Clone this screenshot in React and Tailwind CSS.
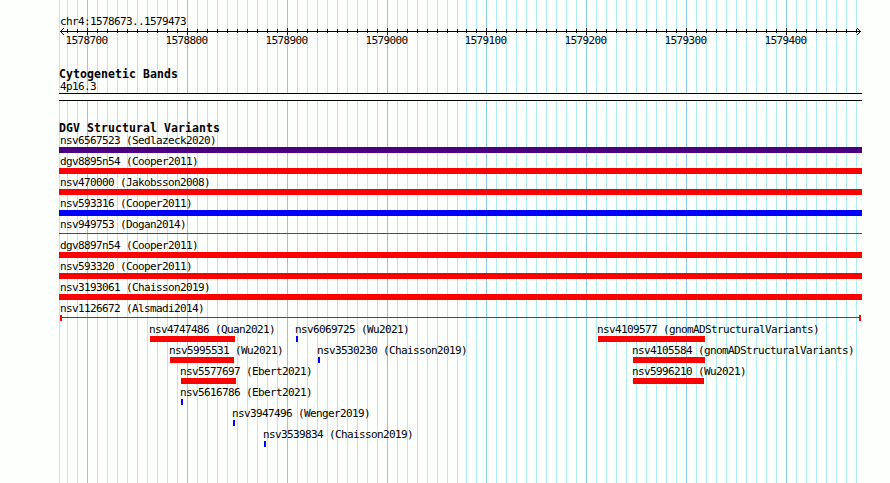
const LEFT = 59;
const WIDTH = 803;
const CHAR = 6;

// minor grid line every 10 bases
const gridLines = Array.from({ length: 80 }, (_, i) => {
    const x = 67 + i * 10;
    return { x: x > 460 ? x - 1 : x, major: i % 10 === 2 };
});

const axisLabels = [
    '1578700',
    '1578800',
    '1578900',
    '1579000',
    '1579100',
    '1579200',
    '1579300',
    '1579400',
];

const fullVariants = [
    { label: 'nsv6567523 (Sedlazeck2020)', color: 'bg-[#4b0082]' },
    { label: 'dgv8895n54 (Cooper2011)', color: 'bg-[#ff0000]' },
    { label: 'nsv470000 (Jakobsson2008)', color: 'bg-[#ff0000]' },
    { label: 'nsv593316 (Cooper2011)', color: 'bg-[#0000ff]' },
    { label: 'nsv949753 (Dogan2014)', kind: 'line' },
    { label: 'dgv8897n54 (Cooper2011)', color: 'bg-[#ff0000]' },
    { label: 'nsv593320 (Cooper2011)', color: 'bg-[#ff0000]' },
    { label: 'nsv3193061 (Chaisson2019)', color: 'bg-[#ff0000]' },
    { label: 'nsv1126672 (Alsmadi2014)', kind: 'span' },
];

const red = 'bg-[#ff0000]';
const blue = 'bg-[#0000ff]';

const partialVariants = [
    [
        { label: 'nsv4747486 (Quan2021)', start: 150, end: 235, color: red },
        { label: 'nsv6069725 (Wu2021)', start: 296, end: 298, color: blue },
        { label: 'nsv4109577 (gnomADStructuralVariants)', start: 598, end: 705, color: red },
    ],
    [
        { label: 'nsv5995531 (Wu2021)', start: 170, end: 234, color: red },
        { label: 'nsv3530230 (Chaisson2019)', start: 318, end: 320, color: blue },
        { label: 'nsv4105584 (gnomADStructuralVariants)', start: 633, end: 705, color: red },
    ],
    [
        { label: 'nsv5577697 (Ebert2021)', start: 181, end: 236, color: red },
        { label: 'nsv5996210 (Wu2021)', start: 633, end: 704, color: red },
    ],
    [{ label: 'nsv5616786 (Ebert2021)', start: 181, end: 183, color: blue }],
    [{ label: 'nsv3947496 (Wenger2019)', start: 233, end: 235, color: blue }],
    [{ label: 'nsv3539834 (Chaisson2019)', start: 264, end: 266, color: blue }],
];

const Label = ({ children }) => (
    <div className="h-[13px] whitespace-pre font-['DejaVu_Sans_Mono',monospace] text-[11px] leading-[13px] tracking-[-0.622px] text-black">
        {children}
    </div>
);

const Heading = ({ children }) => (
    <h2 className="h-[13px] whitespace-pre font-['DejaVu_Sans_Mono',monospace] text-[11.5px] font-bold leading-[13px] tracking-[0.077px] text-black">
        {children}
    </h2>
);

const Grid = () => (
    <svg className="absolute inset-0" width="890" height="483" shapeRendering="crispEdges">
        <rect x={LEFT} y="0" width="1" height="483" fill="#afeeee" />
        {gridLines.map(({ x, major }) => (
            <rect key={x} x={x} y="0" width="1" height="483" fill={major ? '#87ceeb' : '#afeeee'} />
        ))}
    </svg>
);

const Axis = () => (
    <svg className="block" width={WIDTH} height="7" viewBox="59 28 803 7" shapeRendering="crispEdges">
        <rect x="60" y="31" width="801" height="1" />
        {gridLines.map(({ x, major }) => (
            <rect key={x} x={x} y={major ? 28 : 29} width="1" height={major ? 7 : 4} />
        ))}
        {[1, 2, 3].map((d) => (
            <g key={d}>
                <rect x={60 + d} y={31 - d} width="1" height="1" />
                <rect x={60 + d} y={31 + d} width="1" height="1" />
                <rect x={860 - d} y={31 - d} width="1" height="1" />
                <rect x={860 - d} y={31 + d} width="1" height="1" />
            </g>
        ))}
    </svg>
);

const Glyph = ({ kind, color }) => {
    if (kind === 'line') {
        return (
            <div className="h-[6px] pt-[2px]">
                <div className="h-px bg-[#ff0000]" />
            </div>
        );
    }
    if (kind === 'span') {
        return (
            <div className="mx-px flex h-[6px]">
                <div className="w-[2px] bg-[#ff0000]" />
                <div className="mt-[2px] h-px flex-1 bg-[#ff0000]" />
                <div className="w-[2px] bg-[#ff0000]" />
            </div>
        );
    }
    return <div className={`h-[6px] ${color}`} />;
};

const VariantRow = ({ items }) => {
    let cursor = LEFT;

    return (
        <div className="flex h-[21px]">
            {items.map((item) => {
                const offset = item.start - 1 - cursor;
                const width = item.label.length * CHAR;
                cursor = item.start - 1 + width;
                return (
                    <div key={item.label} className="shrink-0" style={{ marginLeft: offset, width }}>
                        <Label>{item.label}</Label>
                        <div className={`ml-px h-[6px] ${item.color}`} style={{ width: item.end - item.start }} />
                    </div>
                );
            })}
        </div>
    );
};

const App = () => (
    <div className="relative h-[483px] w-[890px] overflow-hidden bg-[#fdfffc]">
        <Grid />

        <main className="relative ml-[59px] w-[803px] pt-[15px]">
            {/* Ruler */}
            <div className="h-[13px] pl-px">
                <Label>chr4:1578673..1579473</Label>
            </div>
            <Axis />
            <div className="-mt-px flex h-[34px] gap-[58px] pl-[6.5px]">
                {axisLabels.map((label, i) => (
                    <div key={label} className={i === 4 ? '-ml-px w-[42px]' : 'w-[42px]'}>
                        <Label>{label}</Label>
                    </div>
                ))}
            </div>

            {/* Cytogenetic bands */}
            <Heading>Cytogenetic Bands</Heading>
            <div className="-mt-px h-[13px] pl-px">
                <Label>4p16.3</Label>
            </div>
            <div className="h-[8px] border-y border-black bg-[#fdfffc]" />

            {/* Structural variants */}
            <div className="mt-[21px]">
                <Heading>DGV Structural Variants</Heading>
            </div>
            <div className="-mt-px">
                {fullVariants.map((variant) => (
                    <div key={variant.label} className="h-[21px]">
                        <div className="pl-px">
                            <Label>{variant.label}</Label>
                        </div>
                        <Glyph kind={variant.kind} color={variant.color} />
                    </div>
                ))}
                {partialVariants.map((items) => (
                    <VariantRow key={items[0].label} items={items} />
                ))}
            </div>
        </main>
    </div>
);

export default App;
